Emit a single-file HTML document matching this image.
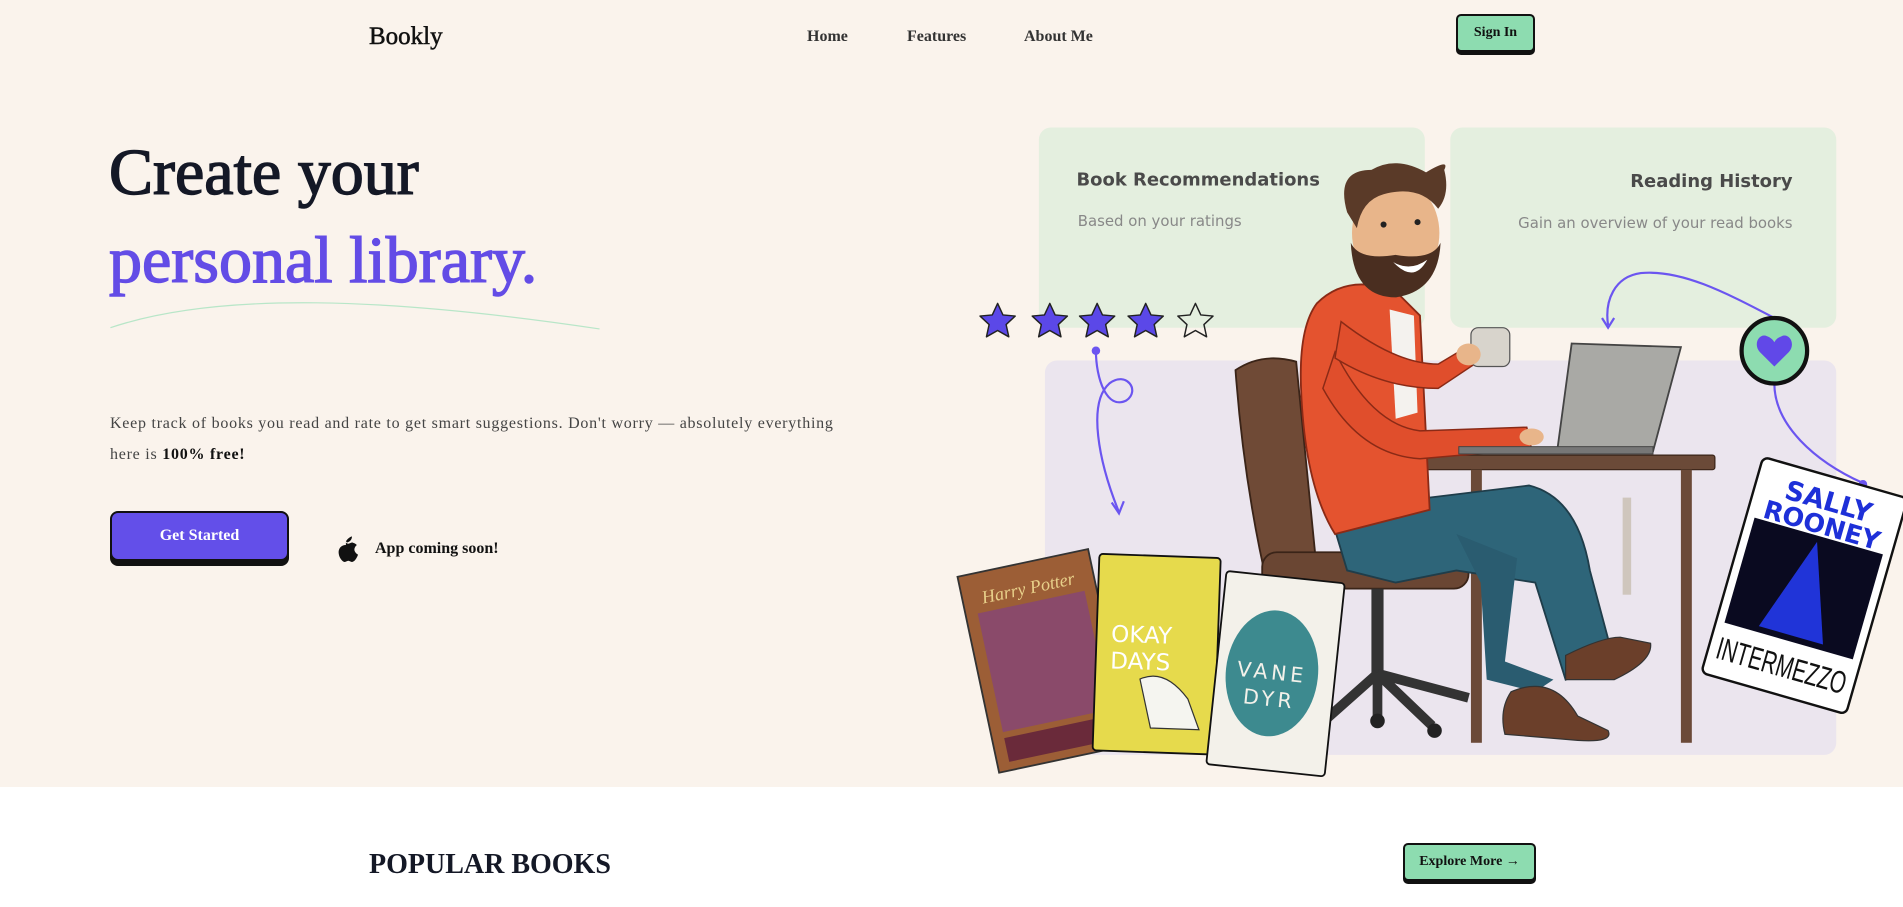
<!DOCTYPE html>
<html><head><meta charset="utf-8"><style>
*{margin:0;padding:0;box-sizing:border-box}
body{width:1903px;height:907px;overflow:hidden;background:#fff;font-family:"Liberation Serif",serif;position:relative}
.hero{position:absolute;left:0;top:0;width:1903px;height:787px;background:#faf3ec}
.abs{position:absolute;white-space:nowrap}
.nav{font-size:16px;font-weight:bold;color:#333;top:28px}
.btn{position:absolute;background:#8ddcb0;border:2px solid #111;border-radius:5px;box-shadow:0 3px 0 #111;font-weight:bold;color:#111;display:flex;align-items:center;justify-content:center}
svg{position:absolute;left:0;top:0}
</style></head><body>
<div class="hero"></div>
<div class="abs" style="left:369px;top:23px;font-size:25px;color:#111;-webkit-text-stroke:0.5px #111">Bookly</div>
<div class="abs nav" style="left:807px">Home</div>
<div class="abs nav" style="left:907px">Features</div>
<div class="abs nav" style="left:1024px">About Me</div>
<div class="btn" style="left:1456px;top:14px;width:79px;height:38px;font-size:14px">Sign In</div>

<div class="abs" style="left:109px;top:133px;font-size:66px;color:#141826;line-height:80px;-webkit-text-stroke:1.4px #141826">Create your</div>
<div class="abs" style="left:109px;top:221px;font-size:66px;color:#634ce6;line-height:80px;-webkit-text-stroke:1.4px #634ce6">personal library.</div>
<div class="abs" style="left:110px;top:408px;font-size:16px;color:#444;line-height:31px;letter-spacing:0.75px">Keep track of books you read and rate to get smart suggestions. Don't worry — absolutely everything<br>here is <b style="color:#111">100% free!</b></div>
<div class="btn" style="left:110px;top:511px;width:179px;height:50px;background:#634fe9;color:#fff;font-size:16px;border-radius:8px;box-shadow:0 5px 0 #111">Get Started</div>
<div class="abs" style="left:375px;top:540px;font-size:16px;font-weight:bold;color:#111">App coming soon!</div>

<div class="abs" style="left:369px;top:849px;font-size:28px;font-weight:bold;color:#141826">POPULAR BOOKS</div>
<div class="btn" style="left:1403px;top:843px;width:133px;height:38px;font-size:14px">Explore More →</div>

<svg width="1903" height="907" viewBox="0 0 1568 747.3">
<path d="M91,270 C180,240 320,245 494,271" fill="none" stroke="#b8e6c8" stroke-width="1"/>
<path d="M285,446 c2,-3 4,-4 5,-4 c0,2 -1,4 -4,5z M285,449 c-4,0 -6,3 -6,6 c0,4 3,8 5,8 c1,0 2,-1 3,-1 c1,0 2,1 3,1 c2,0 4,-3 5,-6 c-2,-1 -3,-3 -3,-4 c0,-2 1,-3 2,-4 c-1,-1 -3,-2 -4,-2 c-1,0 -2,1 -3,1 c-1,0 -2,-1 -2,-1z" fill="#111"/>
<rect x="856" y="105" width="318" height="165" rx="10" fill="#e4efdf"/>
<rect x="1195" y="105" width="318" height="165" rx="10" fill="#e4efdf"/>
<rect x="861" y="297" width="652" height="325" rx="10" fill="#ebe5ee"/>
<g font-family="'DejaVu Sans',sans-serif">
<text x="887" y="153" font-size="14.8" font-weight="bold" fill="#4a4a4a">Book Recommendations</text>
<text x="888" y="186" font-size="12.3" fill="#888">Based on your ratings</text>
<text x="1477" y="154" font-size="14.8" font-weight="bold" fill="#4a4a4a" text-anchor="end">Reading History</text>
<text x="1477" y="188" font-size="12.3" fill="#888" text-anchor="end">Gain an overview of your read books</text>
</g>
<g stroke="#222" stroke-width="1.2" stroke-linejoin="round">
<path id="st" d="M0,-15 L4.4,-5.5 L14.5,-4.6 L7,2.4 L9.2,12.5 L0,7.3 L-9.2,12.5 L-7,2.4 L-14.5,-4.6 L-4.4,-5.5Z" fill="#5b48e8" transform="translate(822,265)"/>
<use href="#st" x="43" y="0"/><use href="#st" x="82" y="0"/><use href="#st" x="122" y="0"/>
<path d="M0,-15 L4.4,-5.5 L14.5,-4.6 L7,2.4 L9.2,12.5 L0,7.3 L-9.2,12.5 L-7,2.4 L-14.5,-4.6 L-4.4,-5.5Z" fill="none" transform="translate(985,265)"/>
</g>
<g fill="none" stroke="#6b55f0" stroke-width="1.8">
<path d="M903,289 C903,312 912,338 928,330 C940,322 928,305 914,316 C896,332 905,380 922,422"/>
<path d="M916,414 L922,423 L926,413"/>
<path d="M1462,262 C1420,240 1385,222 1352,225 C1330,228 1322,248 1325,268"/>
<path d="M1320,262 L1325,270 L1330,262"/>
<path d="M1462,316 C1462,350 1495,380 1535,398"/>
</g>
<circle cx="903" cy="289" r="3.5" fill="#6b55f0"/>
<circle cx="1535" cy="399" r="3.5" fill="#6b55f0"/>
<circle cx="1462" cy="289" r="27" fill="#8ddcb0" stroke="#111" stroke-width="3.5"/>
<path d="M1462,302 L1450,290 C1444,283 1450,274 1456,277 C1459,278 1461,280 1462,282 C1463,280 1465,278 1468,277 C1474,274 1480,283 1474,290Z" fill="#6148e8"/>
<path d="M1018,305 Q1040,290 1068,298 L1085,470 L1045,485 Q1025,400 1018,305Z" fill="#6f4a36" stroke="#3a2418" stroke-width="1.5"/>
<rect x="1040" y="455" width="170" height="30" rx="12" fill="#6a4633" stroke="#3a2418" stroke-width="1.5"/>
<rect x="1130" y="485" width="10" height="70" fill="#333"/>
<path d="M1135,555 L1090,595 M1135,555 L1180,598 M1135,555 L1135,590 M1135,555 L1210,575" stroke="#333" stroke-width="8" fill="none"/>
<circle cx="1090" cy="600" r="6" fill="#222"/><circle cx="1182" cy="602" r="6" fill="#222"/><circle cx="1135" cy="594" r="6" fill="#222"/>
<rect x="1173" y="375" width="240" height="12" rx="2" fill="#6b4a38" stroke="#3a2418"/>
<rect x="1212" y="387" width="9" height="225" fill="#6b4a38"/>
<rect x="1385" y="387" width="9" height="225" fill="#6b4a38"/>
<rect x="1337" y="410" width="7" height="80" fill="#cfc6bd"/>
<path d="M1095,420 L1260,400 Q1300,410 1310,470 L1330,545 L1290,560 L1265,480 L1200,470 L1150,480 L1110,470Z" fill="#2e6579" stroke="#1f3d4a" stroke-width="1.5"/>
<path d="M1200,440 L1250,460 L1240,545 L1280,560 L1265,570 L1225,560 L1220,480Z" fill="#2a5c70"/>
<path d="M1245,570 Q1280,555 1300,590 L1325,602 Q1330,612 1300,610 L1240,605 Q1235,585 1245,570Z" fill="#6b3f2a" stroke="#333"/>
<path d="M1290,540 Q1320,525 1335,525 L1360,530 Q1362,545 1330,560 L1290,560Z" fill="#6b3f2a" stroke="#333"/>
<path d="M1085,250 Q1110,225 1150,240 L1170,260 L1178,420 L1100,440 Q1075,400 1072,320 Q1070,270 1085,250Z" fill="#e4532f" stroke="#8a2a16" stroke-width="1.5"/>
<path d="M1145,255 L1165,260 L1168,340 L1150,345Z" fill="#f4f2ee"/>
<path d="M1100,290 Q1130,350 1170,355 L1258,352 L1262,370 L1170,378 Q1120,375 1090,320Z" fill="#e04e2c" stroke="#8a2a16" stroke-width="1.2"/>
<path d="M1105,265 Q1150,300 1185,300 L1210,285 L1215,300 L1185,320 Q1140,320 1100,295Z" fill="#e04e2c" stroke="#8a2a16" stroke-width="1.2"/>
<rect x="1212" y="270" width="32" height="32" rx="6" fill="#d8d4cc" stroke="#555"/>
<ellipse cx="1210" cy="292" rx="10" ry="9" fill="#e8b58a"/>
<ellipse cx="1262" cy="360" rx="10" ry="7" fill="#e8b58a"/>
<ellipse cx="1150" cy="192" rx="36" ry="44" fill="#e8b58a"/>
<path d="M1113,200 Q1115,245 1150,245 Q1185,240 1187,200 Q1180,215 1150,210 Q1120,215 1113,200Z" fill="#4a2e20"/>
<path d="M1148,216 Q1162,224 1176,214 Q1165,234 1148,216Z" fill="#fff"/>
<circle cx="1140" cy="185" r="2.5" fill="#222"/><circle cx="1168" cy="183" r="2.5" fill="#222"/>
<path d="M1110,175 Q1100,140 1130,140 Q1150,128 1175,142 Q1195,130 1190,140 Q1195,160 1185,172 Q1170,152 1140,160 Q1122,165 1118,188Z" fill="#5a3a28"/>
<path d="M1295,283 L1385,286 L1362,372 L1283,372Z" fill="#a9a9a5" stroke="#444" stroke-width="1.5"/>
<rect x="1202" y="368" width="160" height="6" fill="#777" stroke="#444" stroke-width="0.8"/>
<g transform="rotate(-12 860 545)">
<rect x="805" y="462" width="110" height="165" fill="#9c5e36" stroke="#333" stroke-width="1.5"/>
<rect x="815" y="495" width="90" height="100" fill="#8a4a6a"/>
<rect x="815" y="600" width="90" height="20" fill="#6a2a3a"/>
<text x="860" y="488" font-size="15" fill="#e8d08a" text-anchor="middle" font-family="'Liberation Serif',serif" font-style="italic">Harry Potter</text>
</g>
<g transform="rotate(2 953 540)">
<rect x="903" y="458" width="100" height="162" rx="3" fill="#e6da4c" stroke="#111" stroke-width="1.5"/>
<text x="915" y="530" font-size="19" fill="#fff" font-family="'DejaVu Sans',sans-serif">OKAY</text>
<text x="915" y="552" font-size="19" fill="#fff" font-family="'DejaVu Sans',sans-serif">DAYS</text>
<path d="M940,560 Q960,550 980,575 L990,600 L950,600Z" fill="#f5f5f0" stroke="#333"/>
</g>
<g transform="rotate(6 1050 555)">
<rect x="1002" y="475" width="98" height="160" rx="3" fill="#f3f1ea" stroke="#111" stroke-width="1.5"/>
<ellipse cx="1048" cy="555" rx="38" ry="52" fill="#3d8a8f"/>
<text x="1048" y="560" font-size="17" fill="#f3f1ea" text-anchor="middle" font-family="'DejaVu Sans',sans-serif" letter-spacing="3">VANE</text>
<text x="1048" y="582" font-size="17" fill="#f3f1ea" text-anchor="middle" font-family="'DejaVu Sans',sans-serif" letter-spacing="3">DYR</text>
</g>
<g transform="rotate(16 1487 482)">
<rect x="1425" y="390" width="124" height="185" rx="5" fill="#fff" stroke="#111" stroke-width="2"/>
<rect x="1432" y="440" width="110" height="90" fill="#0a0a20"/>
<path d="M1487,445 L1515,525 L1460,525Z" fill="#2034d8"/>
<text x="1487" y="418" font-size="22" font-weight="bold" fill="#1e30d8" text-anchor="middle" font-family="'DejaVu Sans',sans-serif">SALLY</text>
<text x="1487" y="438" font-size="21" font-weight="bold" fill="#1e30d8" text-anchor="middle" font-family="'DejaVu Sans',sans-serif">ROONEY</text>
<text x="1487" y="560" font-size="26" fill="#111" text-anchor="middle" font-family="'Liberation Sans Narrow','Liberation Sans',sans-serif" textLength="110" lengthAdjust="spacingAndGlyphs">INTERMEZZO</text>
</g>
</svg>
</body></html>
